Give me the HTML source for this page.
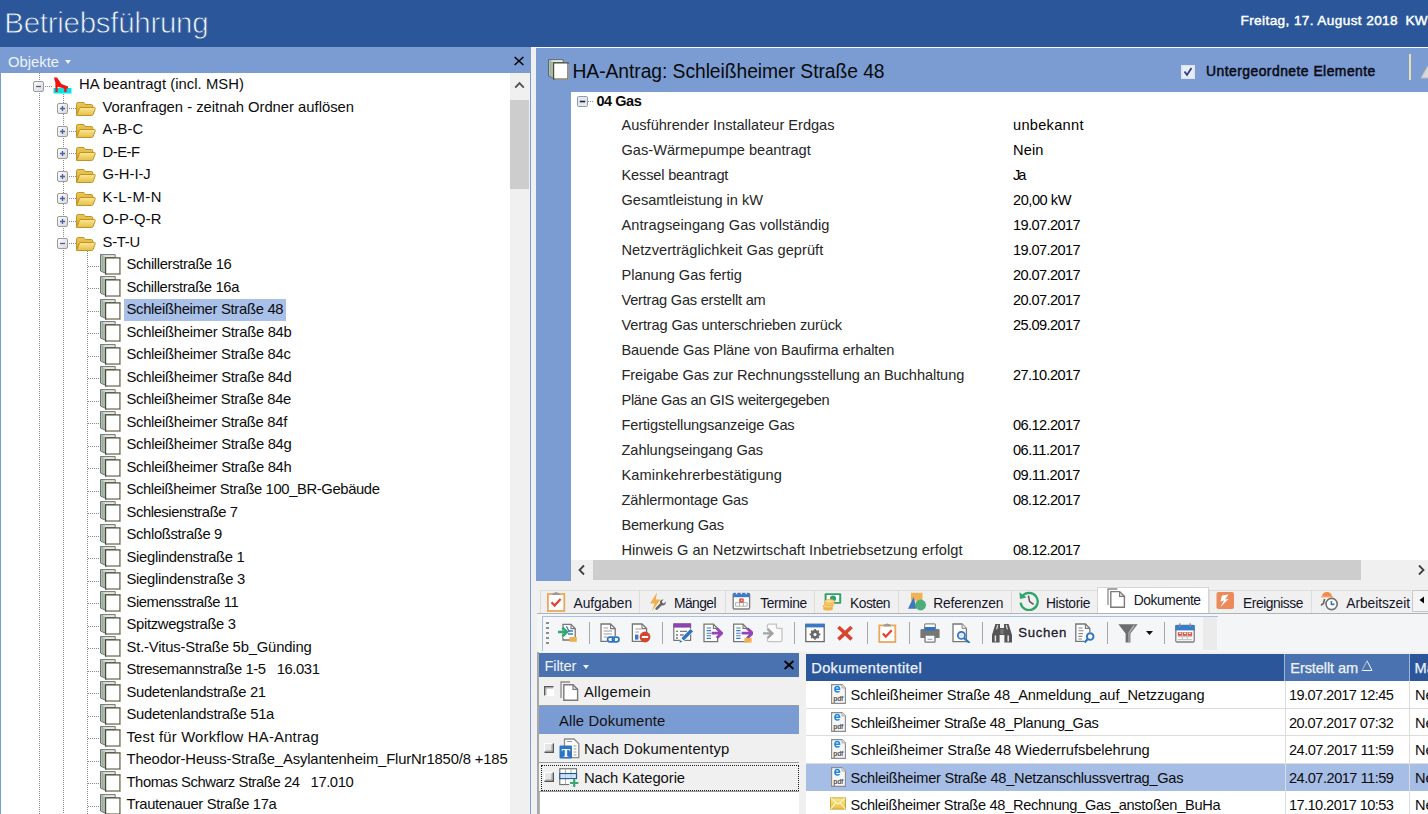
<!DOCTYPE html>
<html lang="de"><head><meta charset="utf-8"><title>Betriebsführung</title>
<style>
*{box-sizing:border-box;margin:0;padding:0}
html,body{width:1428px;height:814px;overflow:hidden}
body{position:relative;background:#f0f0f0;font-family:"Liberation Sans",sans-serif;font-size:14.5px;color:#111}
div,span,svg{position:absolute}
.ic{position:absolute;overflow:visible}
#top{left:0;top:0;width:1428px;height:47px;background:#2b579a}
#apptitle{left:4.3px;top:2.5px;font-size:29.5px;line-height:40px;color:#f4f7fb;white-space:nowrap;-webkit-text-stroke:0.8px #2b579a}
#date{left:1240.5px;top:10px;font-size:13.6px;line-height:22px;font-weight:400;-webkit-text-stroke:0.45px #fff;color:#fff;white-space:nowrap}
#left{left:0;top:47px;width:531px;height:767px;background:#fff}
#objbar{left:0;top:0;width:531px;height:26px;background:#7a9cd2}
.cap{left:8px;top:0;line-height:30px;color:#eef2fa;font-size:14.8px;white-space:nowrap}
.dd{left:65px;top:13px;width:0;height:0;border-left:3.5px solid transparent;border-right:3.5px solid transparent;border-top:4px solid #eef2fa}
#objbar .xbtn{left:512.7px;top:8.2px}
#tree{left:0;top:26px;width:510px;height:741px;background:#fff;overflow:hidden;border-left:1.5px solid #7a9cd2}
#tree>*{margin-left:-1.5px}
.vl{width:1px;background-image:linear-gradient(#8a8a8a 50%,transparent 50%);background-size:1px 2px}
.hl{height:1px;background-image:linear-gradient(90deg,#8a8a8a 50%,transparent 50%);background-size:2px 1px}
.tt{height:22.5px;line-height:22.5px;white-space:pre;font-size:14.8px;color:#0c0c0c}
.selbg{background:#a9c0e8}
#vsb{left:510px;top:26px;width:21px;height:741px;background:#f0f0f0;border-right:1px solid #7a9cd2}
#vthumb{left:0;top:26.5px;width:18.5px;height:89.5px;background:#cdcdcd}
#right{left:536px;top:47px;width:892px;height:533.5px;background:#7a9cd2;overflow:hidden}
#rtop{left:531px;top:46.7px;width:897px;height:1.4px;background:#f6f8fb;z-index:3}
#rtitle{left:36.5px;top:10px;font-size:19.3px;line-height:30px;white-space:nowrap;color:#0a0a0a}
#chk{left:645px;top:17.5px;width:14px;height:14px}
#sub{left:670px;top:12px;font-size:13.9px;font-weight:400;-webkit-text-stroke:0.5px #0a0a14;line-height:24px;white-space:nowrap;color:#0a0a14}
#vsep{left:873px;top:6.5px;width:1.5px;height:26px;background:#e6dfb0}
#detail{left:35px;top:45px;width:857px;height:488.5px;background:#fff;overflow:hidden}
.dh{font-weight:700;font-size:14.5px;line-height:23px;white-space:nowrap;color:#0a0a0a}
.dl{left:50.5px;height:25px;line-height:25px;white-space:nowrap;font-size:14.6px;color:#262626}
.dv{left:442px;height:25px;line-height:25px;white-space:nowrap;font-size:14.6px;color:#000}
#hsb{left:0;top:468px;width:857px;height:20.5px;background:#f0f0f0}
#hthumb{left:21.5px;top:0;width:768.5px;height:19.5px;background:#cdcdcd}
#tabs{left:0;top:587px;width:1428px;height:27px}
#tabs:after{content:"";position:absolute;left:537px;right:0;top:26px;height:1.2px;background:#b2b2b2}
.tab{top:2.5px;height:23.5px;border-left:1px solid #dcdcdc;border-top:1px solid #dcdcdc;background:#f0f0f0}
.tab span{top:0;line-height:25px;font-size:13.8px;white-space:nowrap;color:#15152a}
.tab.act{top:-0.4px;height:26.2px;background:#fff;border:1px solid #d6d6d6;border-bottom:none;z-index:2}
.tab.act span{top:0.8px;line-height:25px}
#tabscroll{left:1412px;top:3px;width:17px;height:22px;background:#f4f4f4;border:1px solid #c8c8c8}
#tbwrap{left:537px;top:614.2px;width:891px;height:38.3px;background:#f4f5f7}
#paneborder{left:536.8px;top:613.6px;width:2px;height:201px;background:#a8a8a8}
#tb{left:4.5px;top:2.3px;width:676px;height:35px;background:#f5f6f8;border-left:1.5px solid #a9c0e6;border-top:1.5px solid #a9c0e6}
#tb>*{margin-left:-1.5px;margin-top:-1.5px}
#grip{left:5px;top:6px;width:3px;height:24px;background-image:linear-gradient(#8c8c8c 50%,transparent 50%);background-size:3px 5px}
.tsep{top:6px;width:1px;height:22px;background:#a8a8a8}
#suchen{left:477.25px;top:6px;font-weight:400;-webkit-text-stroke:0.3px #1b1b2b;font-size:13.2px;line-height:22px;color:#1b1b2b;white-space:nowrap}
#ovf{left:662px;top:1px;width:14px;height:33px;background:#ebebeb}
#filter{left:539px;top:652.5px;width:260px;height:162px}
#fhead{left:0;top:0;width:260px;height:24px;background:#4a72b0}
#fhead .cap{left:5.5px;line-height:26px;font-size:14.8px}
#fhead .dd{left:43.5px;top:12px}
#fhead .xbtn{left:243.5px;top:6.5px}
.frow{left:0;width:260px;background:#f0f0f0;border-bottom:1.8px solid #9c9c9c}
.frow span{top:0;line-height:30px;font-size:14.8px;white-space:nowrap;color:#101010}
.frow.fsel{background:#7a9cd2;border-bottom:none}
.focus{left:1.5px;top:1.6px;right:0;bottom:0.2px;border:1.3px dotted #1a1a1a}
#fbody{left:0;top:139.3px;width:260px;height:30px;background:#fff;border-left:1.5px solid #b5b5b5}
#grid{left:806px;top:654px;width:622px;height:160px;background:#fff;overflow:hidden}
#ghead{left:0;top:0;width:622px;height:27px;background:#2b579a}
.gh{top:0;height:27px;line-height:28.5px;-webkit-text-stroke:0.25px #eef2fa;padding-left:5.25px;color:#eef2fa;font-size:14.6px;white-space:nowrap;border-right:1px solid #9fb4d8;overflow:hidden}
.gh.gsort{background:#4a72b0}
.gr{left:0;width:622px;height:27.5px;border-bottom:1px solid #dcdcdc}
.gr.gsel{background:#a6bde6;border-bottom-color:#a6bde6}
.gt{left:44.6px;top:0;line-height:28px;white-space:nowrap;font-size:14.6px;color:#0c0c0c}
.gd{left:483px;top:0;line-height:28px;white-space:nowrap;font-size:14.6px;color:#0c0c0c}
.gm{left:609px;top:0;line-height:28px;white-space:nowrap;font-size:14.6px;color:#0c0c0c}
.gvl{top:27px;width:1px;height:140px;background:#dcdcdc}

</style></head>
<body>
<svg width="0" height="0" style="position:absolute"><defs>
<linearGradient id="gbox" x1="0" y1="0" x2="1" y2="1"><stop offset="0" stop-color="#fff"/><stop offset="1" stop-color="#d6d6d6"/></linearGradient>
<linearGradient id="gfold" x1="0" y1="0" x2="0" y2="1"><stop offset="0" stop-color="#fbe894"/><stop offset="1" stop-color="#e5bd48"/></linearGradient>
<linearGradient id="gfold2" x1="0" y1="0" x2="0" y2="1"><stop offset="0" stop-color="#ecc958"/><stop offset="1" stop-color="#d3a632"/></linearGradient>
<linearGradient id="gleaf" x1="0" y1="0" x2="1" y2="0"><stop offset="0" stop-color="#a9bfa9"/><stop offset="0.3" stop-color="#dfe9dd"/><stop offset="1" stop-color="#e4ebe2"/></linearGradient>
<linearGradient id="gmail" x1="0" y1="0" x2="0" y2="1"><stop offset="0" stop-color="#fbe88c"/><stop offset="1" stop-color="#e7c047"/></linearGradient>
<symbol id="minus" viewBox="0 0 11 11"><rect x="0.5" y="0.5" width="10" height="10" rx="1.5" fill="url(#gbox)" stroke="#9b9b9b"/><path d="M3 5.5 H8" stroke="#4a5fa5" stroke-width="1.3"/></symbol>
<symbol id="plus" viewBox="0 0 11 11"><rect x="0.5" y="0.5" width="10" height="10" rx="1.5" fill="url(#gbox)" stroke="#9b9b9b"/><path d="M3 5.5 H8 M5.5 3 V8" stroke="#4a5fa5" stroke-width="1.3"/></symbol>
<symbol id="minus2" viewBox="0 0 11 11"><rect x="0.5" y="0.5" width="10" height="10" rx="1" fill="#e4e8ee" stroke="#8a9bb5"/><path d="M2.8 5.5 H8.2" stroke="#222" stroke-width="1.6"/></symbol>
<symbol id="folder" viewBox="0 0 21 16"><path d="M1.5 14 V3.2 Q1.5 1.5 3.2 1.5 H8 Q9.3 1.5 9.8 2.6 L10.2 3.5 H16.3 Q17.8 3.5 17.8 5 V6.5 H6 Q4.6 6.5 4.2 7.8 Z" fill="url(#gfold2)" stroke="#c39424" stroke-width="1"/><path d="M1.6 14.5 L4.4 7.6 Q4.8 6.5 6 6.5 H19.3 Q20.6 6.5 20.2 7.8 L18.2 13.4 Q17.8 14.5 16.6 14.5 Z" fill="url(#gfold)" stroke="#c39424" stroke-width="1"/></symbol>
<symbol id="leaf" viewBox="0 0 21 21"><path d="M0.5 0.6 H15.2 V3.6 H5.4 V19.2 L0.5 17 Z" fill="url(#gleaf)" stroke="#4e5460" stroke-width="0.8"/><path d="M2.4 1.6 V17.8" stroke="#8d9a8d" stroke-width="0.8"/><path d="M4 2.4 V18.4" stroke="#6f7a74" stroke-width="0.7"/><rect x="5.6" y="3.9" width="14.4" height="16.2" fill="#fff" stroke="#4b4b34" stroke-width="1.2"/><path d="M20.6 5 V20.7 H6.6" fill="none" stroke="#b9b99c" stroke-width="0.7"/></symbol>
<symbol id="rootic" viewBox="0 0 19 17"><rect x="0.5" y="11" width="18" height="5.5" fill="#00e5e5"/><path d="M1 0.5 L4 0.5 L8.5 7 L15 9.5 V11.5 H13.6 V15 H11.2 V11.5 L4.6 9.8 V15 H2.4 V6 Z" fill="#f01515"/></symbol>
<symbol id="pdf" viewBox="0 0 15 20"><path d="M0.6 0.6 H11 L14.4 4 V19.4 H0.6 Z" fill="#f6f6f6" stroke="#8c8c8c" stroke-width="1.1"/><path d="M11 0.6 V4 H14.4" fill="#e0e0e0" stroke="#a5a5a5" stroke-width="0.8"/><path d="M4.2 5.2 H8.6 Q8.6 2.4 6.3 2.4 Q3.9 2.4 3.9 5.3 Q3.9 8 6.4 8 Q7.8 8 8.5 7.2" fill="none" stroke="#1e88e0" stroke-width="1.5"/><text x="2.2" y="16.6" font-family="Liberation Sans, sans-serif" font-size="6.8" font-weight="700" fill="#555" letter-spacing="-0.2">pdf</text></symbol>
<symbol id="mail" viewBox="0 0 17 13"><rect x="0.5" y="0.5" width="16" height="12" fill="url(#gmail)" stroke="#caa230" stroke-width="1"/><path d="M0.8 0.8 L8.5 7.2 L16.2 0.8 M0.8 12.2 L6.3 5.6 M16.2 12.2 L10.7 5.6" fill="none" stroke="#fff7cf" stroke-width="1.1"/></symbol>
<symbol id="pin_dn" viewBox="0 0 10 10"><rect x="0" y="0" width="10" height="10" fill="#fff"/><path d="M0.7 9.5 V0.7 H9.5" fill="none" stroke="#5a5a5a" stroke-width="1.4"/><path d="M2 9 V2 H9" fill="none" stroke="#a8a8a8" stroke-width="1"/></symbol>
<symbol id="pin_up" viewBox="0 0 10 10"><rect x="0" y="0" width="10" height="10" fill="#e6e6e6"/><path d="M0.5 9 V0.5 H9" fill="none" stroke="#fff" stroke-width="1.2"/><path d="M0.5 9.3 H9.3 V0.5" fill="none" stroke="#555" stroke-width="1.4"/><path d="M1.8 8 H8 V1.8" fill="none" stroke="#a0a0a0" stroke-width="1"/></symbol>
<symbol id="f_docs" viewBox="0 0 19 20"><path d="M1 17 V1 H10" fill="none" stroke="#8a8a8a" stroke-width="1.3"/><path d="M3.8 3.8 H13 L17.6 8.4 V19.2 H3.8 Z" fill="#fff" stroke="#7a7a7a" stroke-width="1.4"/><path d="M13 3.8 V8.4 H17.6" fill="none" stroke="#7a7a7a" stroke-width="1.2"/></symbol>
<symbol id="f_type" viewBox="0 0 21 21"><path d="M5.5 1 H15 L19.8 5.8 V19.6 H5.5 Z" fill="#fff" stroke="#8a8a8a" stroke-width="1.3"/><path d="M14.5 8 H17.5 M14.5 11 H17.5 M14.5 14 H17.5 M14.5 17 H17.5 M8 3.5 H13" stroke="#9a9a9a" stroke-width="1"/><rect x="0.5" y="7.5" width="12.5" height="13" rx="1" fill="#2f74c0"/><text x="2.4" y="18.8" font-family="Liberation Serif, serif" font-size="13" font-weight="700" fill="#fff">T</text></symbol>
<symbol id="f_cat" viewBox="0 0 21 20"><rect x="0.8" y="0.8" width="17.6" height="16.6" fill="#fff" stroke="#6f6f6f" stroke-width="1.2"/><path d="M6.8 0.8 V17.4 M12.6 0.8 V17.4" stroke="#a5a5a5" stroke-width="0.9"/><rect x="0.8" y="5.8" width="17.6" height="5.4" fill="#cfe4f8" stroke="#24588f" stroke-width="1.2"/><path d="M6.8 6.4 V10.6 M12.6 6.4 V10.6" stroke="#9dbfe0" stroke-width="0.9"/><rect x="10.6" y="11.8" width="10.4" height="8.2" fill="#f0f0f0"/><path d="M16 11.6 V20 M11.6 15.8 H20.4" stroke="#3aa76d" stroke-width="2.3"/></symbol>
<symbol id="t_aufg" viewBox="0 0 20 20"><rect x="0.9" y="2" width="16.4" height="17" fill="#fff" stroke="#e9a85c" stroke-width="1.8"/><path d="M5.5 2.2 Q5.5 0.8 7 0.8 H7.6 Q9 -0.6 10.5 0.8 H11.2 Q12.7 0.8 12.7 2.2 V3 H5.5 Z" fill="#9a9a9a"/><path d="M4.5 10.2 L7.6 13.6 L13.6 7" fill="none" stroke="#e0452f" stroke-width="2.2"/></symbol>
<symbol id="t_mang" viewBox="0 0 20 20"><path d="M10 0.5 L3 11.5 H7.5 L5 19 L13.5 7.5 H8.8 Z" fill="#f0b04f"/><path d="M17.8 8.4 Q19.8 10.4 18 12.6 Q16.6 13.8 14.9 13.3 L10.6 17.6 Q9.6 18.4 8.7 17.5 Q7.9 16.6 8.7 15.7 L13 11.4 Q12.4 9.6 13.8 8.2 Q15 7.1 16.6 7.5 L14.9 9.3 L15.4 11 L17 11.4 L18.8 9.6" fill="#666"/></symbol>
<symbol id="t_term" viewBox="0 0 20 20"><rect x="1.2" y="2.4" width="16.4" height="15.6" rx="1.2" fill="#fff" stroke="#7d7d7d" stroke-width="1.4"/><path d="M1.2 2.2 H17.6 V6.2 H1.2 Z" fill="#3b7cc9"/><path d="M4.6 0.6 V3.2 M9.4 0.6 V3.2 M14.2 0.6 V3.2" stroke="#e8eef8" stroke-width="1.4"/><path d="M3.6 11.6 H15.2 M3.6 15.2 H15.2 M7.5 8 V15.2 M11.3 8 V15.2 M3.6 11.6 V15.2 M15.2 11.6 V15.2" stroke="#b0b0b0" stroke-width="1" fill="none"/><rect x="7.5" y="7.4" width="4" height="4.2" fill="#e04a3a"/><rect x="8.8" y="8.6" width="1.5" height="1.6" fill="#f7c9c0"/></symbol>
<symbol id="t_kost" viewBox="0 0 20 20"><rect x="2.6" y="1.2" width="16.6" height="10.6" rx="1" fill="#2fa06a"/><rect x="4.6" y="3" width="12.6" height="7" fill="#fff"/><circle cx="11" cy="6.5" r="3" fill="#2fa06a"/><ellipse cx="6" cy="16.4" rx="5" ry="2" fill="#f0b545"/><ellipse cx="6" cy="14.2" rx="5" ry="2" fill="#f6cf78" stroke="#e9a93a" stroke-width="0.8"/><ellipse cx="7.6" cy="11.6" rx="5" ry="2" fill="#f6cf78" stroke="#e9a93a" stroke-width="0.8"/><ellipse cx="7.6" cy="9.4" rx="5" ry="2" fill="#f8d98e" stroke="#e9a93a" stroke-width="0.8"/></symbol>
<symbol id="t_ref" viewBox="0 0 20 20"><rect x="4" y="0.8" width="11.5" height="8" fill="#efb257"/><path d="M6.6 5 L1 16.8 H9.6 Z" fill="#3f77bd"/><circle cx="13.6" cy="13" r="5.4" fill="#4dae7c"/></symbol>
<symbol id="t_hist" viewBox="0 0 20 20"><path d="M3.2 5.4 A8.6 8.6 0 1 1 1.6 11.6" fill="none" stroke="#2fa56c" stroke-width="2.3"/><path d="M0.4 1.2 L1 8 L7.6 6.4 Z" fill="#2fa56c"/><path d="M9.4 4.6 L10.6 10.6 L14.6 13.4" fill="none" stroke="#555" stroke-width="1.5"/></symbol>
<symbol id="t_dok" viewBox="0 0 20 20"><path d="M1 17 V1 H10.4" fill="none" stroke="#8a8a8a" stroke-width="1.3"/><path d="M3.8 3.6 H12.6 L17.4 8.4 V19.3 H3.8 Z" fill="#fff" stroke="#7a7a7a" stroke-width="1.4"/><path d="M12.6 3.6 V8.4 H17.4" fill="none" stroke="#7a7a7a" stroke-width="1.2"/></symbol>
<symbol id="t_ereig" viewBox="0 0 20 20"><rect x="0.5" y="1" width="17.5" height="17" rx="2" fill="#ec8a5c"/><path d="M12.6 3.6 L6 4.6 L4.4 10.4 L8 9.6 L4.2 16.2 L12.8 7.8 L9 8.4 Z" fill="#fff"/></symbol>
<symbol id="t_arb" viewBox="0 0 20 20"><path d="M3 5.6 Q3.4 1 8 1 Q12.4 1 13 5.6 Z" fill="#f08c4a"/><rect x="2.4" y="5" width="11.4" height="1.4" fill="#f6a465"/><path d="M5.6 8 L4.4 12.4 L2 14.4" fill="none" stroke="#6a6a6a" stroke-width="1.7"/><circle cx="12.6" cy="13" r="5.6" fill="#fff" stroke="#6f6f6f" stroke-width="1.6"/><path d="M12.4 10 V13.4 H15.4" fill="none" stroke="#3b78c4" stroke-width="1.6"/></symbol>
<symbol id="i_import" viewBox="0 0 20 20"><path d="M5 1.4 H13 L17.2 5.6 V17 H5 Z" fill="#fff" stroke="#767676" stroke-width="1.3"/><path d="M13 1.4 V5.6 H17.2" fill="none" stroke="#767676" stroke-width="1.1"/><path d="M8.4 3.2 L11.4 9 M10 8 H15 M10 11 H15" stroke="#3b78c4" stroke-width="1.3"/><rect x="5" y="5" width="4" height="10" fill="#f5f6f8"/><path d="M-0.6 9 H8 M4.4 4.6 L9 9 L4.4 13.4" fill="none" stroke="#2faa6a" stroke-width="2.6"/><rect x="11.4" y="14" width="7.4" height="4.8" fill="#f0b04f"/></symbol>
<symbol id="i_link" viewBox="0 0 20 20"><path d="M1 1 H10.6 L15.2 5.6 V18.4 H1 Z" fill="#fff" stroke="#767676" stroke-width="1.3"/><path d="M10.6 1 V5.6 H15.2" fill="none" stroke="#767676" stroke-width="1.1"/><path d="M3.6 5 H8 M3.6 8 H12 M3.6 11 H12 M3.6 14 H7" stroke="#9a9a9a" stroke-width="1"/><rect x="7.6" y="13" width="12" height="7" fill="#f5f6f8"/><rect x="7.6" y="14.2" width="6.6" height="4.6" rx="2.3" fill="none" stroke="#2f74c0" stroke-width="1.7"/><rect x="12.4" y="14.2" width="6.6" height="4.6" rx="2.3" fill="none" stroke="#2f74c0" stroke-width="1.7"/></symbol>
<symbol id="i_docminus" viewBox="0 0 20 20"><path d="M1.4 1 H11 L15.6 5.6 V18.4 H1.4 Z" fill="#fff" stroke="#767676" stroke-width="1.3"/><path d="M11 1 V5.6 H15.6" fill="none" stroke="#767676" stroke-width="1.1"/><path d="M4.4 6 H10 M4.4 9 H8" stroke="#9a9a9a" stroke-width="1"/><rect x="4" y="11.6" width="3.4" height="5" fill="#3b78c4"/><circle cx="14" cy="14" r="5.4" fill="#d5442f"/><rect x="10.8" y="13" width="6.4" height="2" rx="0.6" fill="#fff"/></symbol>
<symbol id="i_edit" viewBox="0 0 20 20"><rect x="0.8" y="1" width="16.8" height="16.4" fill="#fff" stroke="#767676" stroke-width="1.2"/><rect x="0.4" y="0.4" width="17.6" height="4.2" fill="#8e44ad"/><path d="M3 8.4 H5 M7 8.4 H14 M3 12 H5 M7 12 H11 M3 15 H5" stroke="#7a7a7a" stroke-width="1.3"/><path d="M17.6 5.6 L20.4 8.4 L11 17.8 L6.8 19.4 L8.2 15 Z" fill="#2f74c0" stroke="#f5f6f8" stroke-width="0.8"/><path d="M6.8 19.4 L8.2 15 L11 17.8 Z" fill="#f5f6f8"/><path d="M6.4 19.8 L7.4 17 L9.2 18.8 Z" fill="#2f74c0"/></symbol>
<symbol id="i_export" viewBox="0 0 20 20"><path d="M1 1.2 H10.4 L14.6 5.4 V18.6 H1 Z" fill="#fff" stroke="#767676" stroke-width="1.3"/><path d="M10.4 1.2 V5.4 H14.6" fill="none" stroke="#767676" stroke-width="1.1"/><path d="M3.6 5 H8 M3.6 7.6 H8 M3.6 10.2 H8 M3.6 12.8 H8 M3.6 15.4 H8" stroke="#3b78c4" stroke-width="1.1"/><rect x="9" y="7" width="7" height="7" fill="#fff"/><path d="M8.6 10.2 H17 M13.8 5.4 L18.8 10.2 L13.8 15" fill="none" stroke="#9545b5" stroke-width="2.8"/></symbol>
<symbol id="i_export2" viewBox="0 0 20 20"><path d="M0.6 1.2 H10 L14.2 5.4 V18.6 H0.6 Z" fill="#fff" stroke="#767676" stroke-width="1.3"/><path d="M10 1.2 V5.4 H14.2" fill="none" stroke="#767676" stroke-width="1.1"/><path d="M3.2 5 H7.6 M3.2 7.6 H7.6 M3.2 10.2 H7.6 M3.2 12.8 H7.6 M3.2 15.4 H7.6" stroke="#3b78c4" stroke-width="1.1"/><rect x="9" y="7" width="7" height="7" fill="#fff"/><path d="M8.6 10.2 H17.6 M14.4 5.4 L19.4 10.2 L14.4 15" fill="none" stroke="#9545b5" stroke-width="2.8"/><rect x="11.4" y="15" width="7.2" height="4.6" fill="#f0b04f"/></symbol>
<symbol id="i_importg" viewBox="0 0 20 20"><path d="M4.4 6.4 V2.6 Q4.4 1.2 5.8 1.2 H13.4 V4 Q13.4 5.4 14.8 5.4 H19 V17.2 Q19 18.6 17.6 18.6 H5.8 Q4.4 18.6 4.4 17.2 V14.4" fill="#fafafa" stroke="#c4c4c4" stroke-width="1.3"/><path d="M-0.4 10.4 H8 M4.6 6 L9.4 10.4 L4.6 14.8" fill="none" stroke="#a3a3a3" stroke-width="2.4"/></symbol>
<symbol id="i_gear" viewBox="0 0 20 20"><rect x="0.8" y="1.4" width="18.4" height="17.2" fill="#fff" stroke="#6a6a6a" stroke-width="1.3"/><rect x="0.4" y="0.8" width="19.2" height="3.6" fill="#3b78c4"/><circle cx="10" cy="11.4" r="3.2" fill="none" stroke="#6a6a6a" stroke-width="2.4"/><path d="M10 6 V16.8 M4.6 11.4 H15.4 M6.2 7.6 L13.8 15.2 M13.8 7.6 L6.2 15.2" stroke="#6a6a6a" stroke-width="1.7"/><circle cx="10" cy="11.4" r="1.5" fill="#fff"/></symbol>
<symbol id="i_x" viewBox="0 0 20 20"><path d="M3.4 4 L16.6 16.4 M16.6 4 L3.4 16.4" stroke="#d9452f" stroke-width="3.6"/></symbol>
<symbol id="i_check" viewBox="0 0 20 20"><rect x="2.3" y="2.4" width="16" height="16.6" fill="#fff" stroke="#e9a85c" stroke-width="1.8"/><path d="M6.6 2.6 Q6.6 1.2 8 1.2 H8.6 Q10.2 -0.2 11.8 1.2 H12.4 Q13.8 1.2 13.8 2.6 V3.4 H6.6 Z" fill="#9a9a9a"/><path d="M5.8 10.4 L8.8 13.6 L14.8 7.2" fill="none" stroke="#e0452f" stroke-width="2.2"/></symbol>
<symbol id="i_print" viewBox="0 0 20 20"><rect x="4.6" y="0.8" width="10.8" height="7" rx="1" fill="#fff" stroke="#8a8a8a" stroke-width="1.2"/><rect x="4.8" y="4" width="10.4" height="4" fill="#2f74c0"/><path d="M0.4 7.4 Q0.4 6 1.8 6 H18.2 Q19.6 6 19.6 7.4 V15 H0.4 Z" fill="#767676"/><rect x="4.8" y="4.2" width="10.4" height="3.4" fill="#2f74c0"/><rect x="5" y="12" width="10" height="7.2" rx="0.8" fill="#fff" stroke="#767676" stroke-width="1.3"/><path d="M7.6 16.4 H12.4" stroke="#9ab5dd" stroke-width="1.4"/></symbol>
<symbol id="i_preview" viewBox="0 0 20 20"><path d="M2 1 H11 L15.4 5.4 V18.6 H2 Z" fill="#fff" stroke="#767676" stroke-width="1.3"/><path d="M11 1 V5.4 H15.4" fill="#e4e4e4" stroke="#8a8a8a" stroke-width="1"/><circle cx="10.4" cy="12.4" r="3.6" fill="#dfe8f5" stroke="#2f74c0" stroke-width="1.7"/><path d="M13.2 15.2 L18.6 20" stroke="#2f74c0" stroke-width="2.2"/></symbol>
<symbol id="i_bino" viewBox="0 0 20 20"><path d="M3.4 1 H8 V5 H12 V1 H16.6 L20 12 V19.4 H12.4 V12 H7.6 V19.4 H0 V12 Z" fill="#555"/><path d="M3.4 12.6 V18.6 M16.2 12.6 V18.6" stroke="#e6e6e6" stroke-width="1.5"/><path d="M5.8 2 L4.6 6.4 M14.2 2 L15.4 6.4" stroke="#d8d8d8" stroke-width="1.2"/><rect x="8.4" y="6" width="3.2" height="5" fill="#777"/></symbol>
<symbol id="i_docsearch" viewBox="0 0 20 20"><path d="M0.8 1 H10.4 L14.8 5.4 V18.4 H0.8 Z" fill="#fff" stroke="#767676" stroke-width="1.3"/><path d="M10.4 1 V5.4 H14.8" fill="none" stroke="#767676" stroke-width="1.1"/><path d="M3.4 5 H7.6 M3.4 7.8 H8.6 M3.4 10.6 H8 M3.4 13.4 H7.4 M3.4 16 H7" stroke="#8a8a8a" stroke-width="1.1"/><rect x="9.4" y="9" width="8" height="10.6" fill="#f5f6f8"/><circle cx="15.2" cy="13.6" r="3.3" fill="#fff" stroke="#2f74c0" stroke-width="1.9"/><path d="M12.8 16 L9.6 19.4" stroke="#2f74c0" stroke-width="2.2"/></symbol>
<symbol id="i_funnel" viewBox="0 0 20 20"><path d="M0.4 1.2 H19.6 L12.4 10.4 V19.6 H7.6 V10.4 Z" fill="#6e6e6e"/><path d="M11.6 10 L17.2 2.6 H15.2 L10.4 9.4 V19 H11.6 Z" fill="#b5b5b5"/></symbol>
<symbol id="i_cal" viewBox="0 0 20 20"><rect x="0.8" y="2.4" width="18.4" height="16.6" rx="1.2" fill="#fff" stroke="#7d7d7d" stroke-width="1.3"/><path d="M0.4 2 H19.6 V7.4 H0.4 Z" fill="#3b7cc9"/><path d="M4.8 0.2 V4 M15.2 0.2 V4" stroke="#8a8a8a" stroke-width="1.2"/><rect x="2.8" y="9.2" width="14.4" height="3.6" fill="#e0503c"/><path d="M7.4 9 V16.6 M12.4 9 V16.6 M2.8 13.6 H17.2 M2.8 16.6 H17.2" stroke="#c4c4c4" stroke-width="1.1"/><path d="M4.2 10.4 H6.2 M9 10.4 H11 M13.8 10.4 H15.8" stroke="#fff" stroke-width="1.4"/></symbol>
</defs></svg>


<div id="top"><div id="apptitle" style="letter-spacing:-0.285px;">Betriebsführung</div><div id="date" style="letter-spacing:0.391px;">Freitag, 17. August 2018<span style="position:static;letter-spacing:0">&nbsp; KW 33</span></div></div>
<div id="left"><div id="objbar"><span class="cap" style="letter-spacing:0.000px;">Objekte</span><span class="dd"></span><svg class="xbtn" width="12" height="12" viewBox="0 0 12 12"><path d="M1.6 2 L10.4 10 M10.4 2 L1.6 10" stroke="#000" stroke-width="1.5" fill="none"/></svg></div>
<div id="tree">
<div class="vl" style="left:39px;top:0;height:741px"></div>
<div class="vl" style="left:63px;top:21px;height:720px"></div>
<div class="vl" style="left:87px;top:178px;height:563px"></div>
<div class="hl" style="left:45px;top:12.50px;width:8px"></div>
<svg class="ic" style="left:33.5px;top:7.50px" width="11" height="11"><use href="#minus"/></svg>
<svg class="ic" style="left:53px;top:3.50px" width="19" height="17"><use href="#rootic"/></svg>
<div class="tt" style="left:79.5px;top:0.15px;letter-spacing:0.056px;">HA beantragt (incl. MSH)</div>
<div class="hl" style="left:69px;top:35.00px;width:8px"></div>
<svg class="ic" style="left:57.5px;top:30.00px" width="11" height="11"><use href="#plus"/></svg>
<svg class="ic" style="left:75.5px;top:27.50px" width="21" height="16"><use href="#folder"/></svg>
<div class="tt" style="left:103px;top:22.65px;letter-spacing:-0.006px;">Voranfragen - zeitnah Ordner auflösen</div>
<div class="hl" style="left:69px;top:57.50px;width:8px"></div>
<svg class="ic" style="left:57.5px;top:52.50px" width="11" height="11"><use href="#plus"/></svg>
<svg class="ic" style="left:75.5px;top:50.00px" width="21" height="16"><use href="#folder"/></svg>
<div class="tt" style="left:103px;top:45.15px;letter-spacing:0.094px;">A-B-C</div>
<div class="hl" style="left:69px;top:80.00px;width:8px"></div>
<svg class="ic" style="left:57.5px;top:75.00px" width="11" height="11"><use href="#plus"/></svg>
<svg class="ic" style="left:75.5px;top:72.50px" width="21" height="16"><use href="#folder"/></svg>
<div class="tt" style="left:103px;top:67.65px;letter-spacing:-0.491px;">D-E-F</div>
<div class="hl" style="left:69px;top:102.50px;width:8px"></div>
<svg class="ic" style="left:57.5px;top:97.50px" width="11" height="11"><use href="#plus"/></svg>
<svg class="ic" style="left:75.5px;top:95.00px" width="21" height="16"><use href="#folder"/></svg>
<div class="tt" style="left:103px;top:90.15px;letter-spacing:-0.036px;">G-H-I-J</div>
<div class="hl" style="left:69px;top:125.00px;width:8px"></div>
<svg class="ic" style="left:57.5px;top:120.00px" width="11" height="11"><use href="#plus"/></svg>
<svg class="ic" style="left:75.5px;top:117.50px" width="21" height="16"><use href="#folder"/></svg>
<div class="tt" style="left:103px;top:112.65px;letter-spacing:0.513px;">K-L-M-N</div>
<div class="hl" style="left:69px;top:147.50px;width:8px"></div>
<svg class="ic" style="left:57.5px;top:142.50px" width="11" height="11"><use href="#plus"/></svg>
<svg class="ic" style="left:75.5px;top:140.00px" width="21" height="16"><use href="#folder"/></svg>
<div class="tt" style="left:103px;top:135.15px;letter-spacing:0.077px;">O-P-Q-R</div>
<div class="hl" style="left:69px;top:170.00px;width:8px"></div>
<svg class="ic" style="left:57.5px;top:165.00px" width="11" height="11"><use href="#minus"/></svg>
<svg class="ic" style="left:75.5px;top:162.50px" width="21" height="16"><use href="#folder"/></svg>
<div class="tt" style="left:103px;top:157.65px;letter-spacing:-0.228px;">S-T-U</div>
<div class="hl" style="left:88px;top:192.50px;width:13px"></div>
<svg class="ic" style="left:100px;top:180.80px" width="21" height="21"><use href="#leaf"/></svg>
<div class="tt" style="left:127px;top:180.15px;letter-spacing:-0.355px;">Schillerstraße 16</div>
<div class="hl" style="left:88px;top:215.00px;width:13px"></div>
<svg class="ic" style="left:100px;top:203.30px" width="21" height="21"><use href="#leaf"/></svg>
<div class="tt" style="left:127px;top:202.65px;letter-spacing:-0.375px;">Schillerstraße 16a</div>
<div class="hl" style="left:88px;top:237.50px;width:13px"></div>
<svg class="ic" style="left:100px;top:225.80px" width="21" height="21"><use href="#leaf"/></svg>
<div class="selbg" style="left:124px;top:225.50px;width:162px;height:22px"></div>
<div class="tt" style="left:127px;top:225.15px;letter-spacing:-0.300px;">Schleißheimer Straße 48</div>
<div class="hl" style="left:88px;top:260.00px;width:13px"></div>
<svg class="ic" style="left:100px;top:248.30px" width="21" height="21"><use href="#leaf"/></svg>
<div class="tt" style="left:127px;top:247.65px;letter-spacing:-0.287px;">Schleißheimer Straße 84b</div>
<div class="hl" style="left:88px;top:282.50px;width:13px"></div>
<svg class="ic" style="left:100px;top:270.80px" width="21" height="21"><use href="#leaf"/></svg>
<div class="tt" style="left:127px;top:270.15px;letter-spacing:-0.294px;">Schleißheimer Straße 84c</div>
<div class="hl" style="left:88px;top:305.00px;width:13px"></div>
<svg class="ic" style="left:100px;top:293.30px" width="21" height="21"><use href="#leaf"/></svg>
<div class="tt" style="left:127px;top:292.65px;letter-spacing:-0.287px;">Schleißheimer Straße 84d</div>
<div class="hl" style="left:88px;top:327.50px;width:13px"></div>
<svg class="ic" style="left:100px;top:315.80px" width="21" height="21"><use href="#leaf"/></svg>
<div class="tt" style="left:127px;top:315.15px;letter-spacing:-0.308px;">Schleißheimer Straße 84e</div>
<div class="hl" style="left:88px;top:350.00px;width:13px"></div>
<svg class="ic" style="left:100px;top:338.30px" width="21" height="21"><use href="#leaf"/></svg>
<div class="tt" style="left:127px;top:337.65px;letter-spacing:-0.303px;">Schleißheimer Straße 84f</div>
<div class="hl" style="left:88px;top:372.50px;width:13px"></div>
<svg class="ic" style="left:100px;top:360.80px" width="21" height="21"><use href="#leaf"/></svg>
<div class="tt" style="left:127px;top:360.15px;letter-spacing:-0.287px;">Schleißheimer Straße 84g</div>
<div class="hl" style="left:88px;top:395.00px;width:13px"></div>
<svg class="ic" style="left:100px;top:383.30px" width="21" height="21"><use href="#leaf"/></svg>
<div class="tt" style="left:127px;top:382.65px;letter-spacing:-0.287px;">Schleißheimer Straße 84h</div>
<div class="hl" style="left:88px;top:417.50px;width:13px"></div>
<svg class="ic" style="left:100px;top:405.80px" width="21" height="21"><use href="#leaf"/></svg>
<div class="tt" style="left:127px;top:405.15px;letter-spacing:-0.385px;">Schleißheimer Straße 100_BR-Gebäude</div>
<div class="hl" style="left:88px;top:440.00px;width:13px"></div>
<svg class="ic" style="left:100px;top:428.30px" width="21" height="21"><use href="#leaf"/></svg>
<div class="tt" style="left:127px;top:427.65px;letter-spacing:-0.438px;">Schlesienstraße 7</div>
<div class="hl" style="left:88px;top:462.50px;width:13px"></div>
<svg class="ic" style="left:100px;top:450.80px" width="21" height="21"><use href="#leaf"/></svg>
<div class="tt" style="left:127px;top:450.15px;letter-spacing:-0.345px;">Schloßstraße 9</div>
<div class="hl" style="left:88px;top:485.00px;width:13px"></div>
<svg class="ic" style="left:100px;top:473.30px" width="21" height="21"><use href="#leaf"/></svg>
<div class="tt" style="left:127px;top:472.65px;letter-spacing:-0.299px;">Sieglindenstraße 1</div>
<div class="hl" style="left:88px;top:507.50px;width:13px"></div>
<svg class="ic" style="left:100px;top:495.80px" width="21" height="21"><use href="#leaf"/></svg>
<div class="tt" style="left:127px;top:495.15px;letter-spacing:-0.272px;">Sieglindenstraße 3</div>
<div class="hl" style="left:88px;top:530.00px;width:13px"></div>
<svg class="ic" style="left:100px;top:518.30px" width="21" height="21"><use href="#leaf"/></svg>
<div class="tt" style="left:127px;top:517.65px;letter-spacing:-0.452px;">Siemensstraße 11</div>
<div class="hl" style="left:88px;top:552.50px;width:13px"></div>
<svg class="ic" style="left:100px;top:540.80px" width="21" height="21"><use href="#leaf"/></svg>
<div class="tt" style="left:127px;top:540.15px;letter-spacing:-0.317px;">Spitzwegstraße 3</div>
<div class="hl" style="left:88px;top:575.00px;width:13px"></div>
<svg class="ic" style="left:100px;top:563.30px" width="21" height="21"><use href="#leaf"/></svg>
<div class="tt" style="left:127px;top:562.65px;letter-spacing:-0.175px;">St.-Vitus-Straße 5b_Günding</div>
<div class="hl" style="left:88px;top:597.50px;width:13px"></div>
<svg class="ic" style="left:100px;top:585.80px" width="21" height="21"><use href="#leaf"/></svg>
<div class="tt" style="left:127px;top:585.15px;letter-spacing:-0.407px;">Stresemannstraße 1-5&nbsp;  16.031</div>
<div class="hl" style="left:88px;top:620.00px;width:13px"></div>
<svg class="ic" style="left:100px;top:608.30px" width="21" height="21"><use href="#leaf"/></svg>
<div class="tt" style="left:127px;top:607.65px;letter-spacing:-0.318px;">Sudetenlandstraße 21</div>
<div class="hl" style="left:88px;top:642.50px;width:13px"></div>
<svg class="ic" style="left:100px;top:630.80px" width="21" height="21"><use href="#leaf"/></svg>
<div class="tt" style="left:127px;top:630.15px;letter-spacing:-0.302px;">Sudetenlandstraße 51a</div>
<div class="hl" style="left:88px;top:665.00px;width:13px"></div>
<svg class="ic" style="left:100px;top:653.30px" width="21" height="21"><use href="#leaf"/></svg>
<div class="tt" style="left:127px;top:652.65px;letter-spacing:0.226px;">Test für Workflow HA-Antrag</div>
<div class="hl" style="left:88px;top:687.50px;width:13px"></div>
<svg class="ic" style="left:100px;top:675.80px" width="21" height="21"><use href="#leaf"/></svg>
<div class="tt" style="left:127px;top:675.15px;letter-spacing:-0.147px;">Theodor-Heuss-Straße_Asylantenheim_FlurNr1850/8 +185</div>
<div class="hl" style="left:88px;top:710.00px;width:13px"></div>
<svg class="ic" style="left:100px;top:698.30px" width="21" height="21"><use href="#leaf"/></svg>
<div class="tt" style="left:127px;top:697.65px;letter-spacing:-0.431px;">Thomas Schwarz Straße 24&nbsp;  17.010</div>
<div class="hl" style="left:88px;top:732.50px;width:13px"></div>
<svg class="ic" style="left:100px;top:720.80px" width="21" height="21"><use href="#leaf"/></svg>
<div class="tt" style="left:127px;top:720.15px;letter-spacing:-0.336px;">Trautenauer Straße 17a</div>
</div>
<div id="vsb"><svg width="19" height="26" viewBox="0 0 19 26" style="position:absolute;left:0;top:0"><path d="M5.2 14.6 L9.5 10.2 L13.8 14.6" stroke="#505050" stroke-width="1.9" fill="none"/></svg><div id="vthumb"></div></div>
</div>
<div id="rtop"></div>
<div id="right">
<svg class="ic" style="left:11.5px;top:12px" width="21" height="21"><use href="#leaf"/></svg>
<div id="rtitle" style="letter-spacing:-0.058px;">HA-Antrag: Schleißheimer Straße 48</div>
<div id="chk"><svg width="14" height="14" viewBox="0 0 14 14"><rect x="0" y="0" width="14" height="14" fill="#dfe4ee"/><rect x="1.5" y="1.5" width="11" height="11" fill="#e9edf5"/><path d="M3.5 6.5 L6 10 L10.5 3" stroke="#2a3f8f" stroke-width="1.8" fill="none"/></svg></div>
<div id="sub" style="letter-spacing:0.466px;">Untergeordnete Elemente</div>
<div id="vsep"></div>
<svg class="ic" style="left:885px;top:17px" width="8" height="14"><path d="M8 0 L0 14 L8 14 Z" fill="#d9d9d9" stroke="#bdbdbd" stroke-width="1"/></svg>
<div id="detail">
<svg class="ic" style="left:5.5px;top:3.5px" width="11" height="11"><use href="#minus2"/></svg>
<div class="hl" style="left:17px;top:8.5px;width:5px"></div>
<div class="dh" style="left:25.5px;top:-2.5px;letter-spacing:-0.471px;">04 Gas</div>
<div class="dl" style="top:21.40px;letter-spacing:-0.011px;">Ausführender Installateur Erdgas</div>
<div class="dv" style="top:21.40px;letter-spacing:0.286px;">unbekannt</div>
<div class="dl" style="top:46.40px;letter-spacing:0.010px;">Gas-Wärmepumpe beantragt</div>
<div class="dv" style="top:46.40px;letter-spacing:0.121px;">Nein</div>
<div class="dl" style="top:71.40px;letter-spacing:-0.174px;">Kessel beantragt</div>
<div class="dv" style="top:71.40px;letter-spacing:-2.011px;">Ja</div>
<div class="dl" style="top:96.40px;letter-spacing:-0.022px;">Gesamtleistung in kW</div>
<div class="dv" style="top:96.40px;letter-spacing:-0.457px;">20,00 kW</div>
<div class="dl" style="top:121.40px;letter-spacing:0.064px;">Antragseingang Gas vollständig</div>
<div class="dv" style="top:121.40px;letter-spacing:-0.605px;">19.07.2017</div>
<div class="dl" style="top:146.40px;letter-spacing:0.045px;">Netzverträglichkeit Gas geprüft</div>
<div class="dv" style="top:146.40px;letter-spacing:-0.605px;">19.07.2017</div>
<div class="dl" style="top:171.40px;letter-spacing:-0.036px;">Planung Gas fertig</div>
<div class="dv" style="top:171.40px;letter-spacing:-0.605px;">20.07.2017</div>
<div class="dl" style="top:196.40px;letter-spacing:-0.228px;">Vertrag Gas erstellt am</div>
<div class="dv" style="top:196.40px;letter-spacing:-0.605px;">20.07.2017</div>
<div class="dl" style="top:221.40px;letter-spacing:-0.152px;">Vertrag Gas unterschrieben zurück</div>
<div class="dv" style="top:221.40px;letter-spacing:-0.605px;">25.09.2017</div>
<div class="dl" style="top:246.40px;letter-spacing:-0.121px;">Bauende Gas Pläne von Baufirma erhalten</div>
<div class="dl" style="top:271.40px;letter-spacing:-0.075px;">Freigabe Gas zur Rechnungsstellung an Buchhaltung</div>
<div class="dv" style="top:271.40px;letter-spacing:-0.605px;">27.10.2017</div>
<div class="dl" style="top:296.40px;letter-spacing:-0.323px;">Pläne Gas an GIS weitergegeben</div>
<div class="dl" style="top:321.40px;letter-spacing:-0.148px;">Fertigstellungsanzeige Gas</div>
<div class="dv" style="top:321.40px;letter-spacing:-0.605px;">06.12.2017</div>
<div class="dl" style="top:346.40px;letter-spacing:-0.068px;">Zahlungseingang Gas</div>
<div class="dv" style="top:346.40px;letter-spacing:-0.497px;">06.11.2017</div>
<div class="dl" style="top:371.40px;letter-spacing:0.104px;">Kaminkehrerbestätigung</div>
<div class="dv" style="top:371.40px;letter-spacing:-0.497px;">09.11.2017</div>
<div class="dl" style="top:396.40px;letter-spacing:-0.131px;">Zählermontage Gas</div>
<div class="dv" style="top:396.40px;letter-spacing:-0.605px;">08.12.2017</div>
<div class="dl" style="top:421.40px;letter-spacing:-0.246px;">Bemerkung Gas</div>
<div class="dl" style="top:446.40px;letter-spacing:0.037px;">Hinweis G an Netzwirtschaft Inbetriebsetzung erfolgt</div>
<div class="dv" style="top:446.40px;letter-spacing:-0.605px;">08.12.2017</div>
<div id="hsb"><svg width="20" height="20" style="position:absolute;left:3px;top:0" viewBox="0 0 20 20"><path d="M10 5.5 L5.5 10 L10 14.5" stroke="#404040" stroke-width="1.8" fill="none"/></svg><div id="hthumb"></div><svg width="20" height="20" style="position:absolute;right:-3px;top:0" viewBox="0 0 20 20"><path d="M8 5.5 L12.5 10 L8 14.5" stroke="#404040" stroke-width="1.8" fill="none"/></svg></div>
</div></div>
<div id="tabs">
<div class="tab" style="left:539.5px;width:99.5px"><svg class="ic" style="left:6.7px;top:1.3px" width="20" height="20"><use href="#t_aufg"/></svg><span style="left:33.0px;letter-spacing:-0.072px;">Aufgaben</span></div>
<div class="tab" style="left:639px;width:85.5px"><svg class="ic" style="left:7.0px;top:1.5px" width="20" height="20"><use href="#t_mang"/></svg><span style="left:34px;letter-spacing:-0.544px;">Mängel</span></div>
<div class="tab" style="left:724.5px;width:89.5px"><svg class="ic" style="left:6.0px;top:0.6px" width="20" height="20"><use href="#t_term"/></svg><span style="left:34.75px;letter-spacing:-0.368px;">Termine</span></div>
<div class="tab" style="left:814px;width:84px"><svg class="ic" style="left:7.0px;top:1.3px" width="20" height="20"><use href="#t_kost"/></svg><span style="left:35px;letter-spacing:-0.495px;">Kosten</span></div>
<div class="tab" style="left:898px;width:112.5px"><svg class="ic" style="left:7.8px;top:1.7px" width="20" height="20"><use href="#t_ref"/></svg><span style="left:34.25px;letter-spacing:-0.134px;">Referenzen</span></div>
<div class="tab" style="left:1010.5px;width:86.5px"><svg class="ic" style="left:7.1px;top:0.9px" width="20" height="20"><use href="#t_hist"/></svg><span style="left:34.5px;letter-spacing:-0.348px;">Historie</span></div>
<div class="tab act" style="left:1097px;width:111.5px"><svg class="ic" style="left:8.5px;top:0.2px" width="20" height="20"><use href="#t_dok"/></svg><span style="left:35.75px;letter-spacing:-0.413px;">Dokumente</span></div>
<div class="tab" style="left:1208.5px;width:102.0px"><svg class="ic" style="left:6.5px;top:0.4px" width="20" height="20"><use href="#t_ereig"/></svg><span style="left:33.5px;letter-spacing:-0.442px;">Ereignisse</span></div>
<div class="tab" style="left:1310.5px;width:100.5px"><svg class="ic" style="left:7.0px;top:0.4px" width="20" height="20"><use href="#t_arb"/></svg><span style="left:34.75px;letter-spacing:-0.061px;">Arbeitszeit</span></div>
<div id="tabscroll"><svg width="16" height="20" viewBox="0 0 16 20"><path d="M11 5.5 L6.5 9 L11 12.5 Z" fill="#000"/></svg></div>
</div>
<div id="paneborder"></div>
<div id="tbwrap"><div id="tb">
<div id="grip"></div>
<svg class="ic" style="left:16.5px;top:6.9px" width="20" height="20"><use href="#i_import"/></svg>
<svg class="ic" style="left:59.0px;top:6.9px" width="20" height="20"><use href="#i_link"/></svg>
<svg class="ic" style="left:89.5px;top:6.9px" width="20" height="20"><use href="#i_docminus"/></svg>
<svg class="ic" style="left:132.0px;top:6.9px" width="20" height="20"><use href="#i_edit"/></svg>
<svg class="ic" style="left:161.5px;top:6.9px" width="20" height="20"><use href="#i_export"/></svg>
<svg class="ic" style="left:191.5px;top:6.9px" width="20" height="20"><use href="#i_export2"/></svg>
<svg class="ic" style="left:221.5px;top:6.9px" width="20" height="20"><use href="#i_importg"/></svg>
<svg class="ic" style="left:264.2px;top:6.9px" width="20" height="20"><use href="#i_gear"/></svg>
<svg class="ic" style="left:294.0px;top:6.9px" width="20" height="20"><use href="#i_x"/></svg>
<svg class="ic" style="left:335.8px;top:6.9px" width="20" height="20"><use href="#i_check"/></svg>
<svg class="ic" style="left:378.7px;top:6.9px" width="20" height="20"><use href="#i_print"/></svg>
<svg class="ic" style="left:409.8px;top:6.9px" width="20" height="20"><use href="#i_preview"/></svg>
<svg class="ic" style="left:451.3px;top:6.9px" width="20" height="20"><use href="#i_bino"/></svg>
<svg class="ic" style="left:534.0px;top:6.9px" width="20" height="20"><use href="#i_docsearch"/></svg>
<svg class="ic" style="left:576.5px;top:6.9px" width="20" height="20"><use href="#i_funnel"/></svg>
<svg class="ic" style="left:634.4px;top:6.9px" width="20" height="20"><use href="#i_cal"/></svg>
<div class="tsep" style="left:48.0px"></div>
<div class="tsep" style="left:120.8px"></div>
<div class="tsep" style="left:253.1px"></div>
<div class="tsep" style="left:325.5px"></div>
<div class="tsep" style="left:368.0px"></div>
<div class="tsep" style="left:440.5px"></div>
<div class="tsep" style="left:565.5px"></div>
<div class="tsep" style="left:623.1px"></div>
<div id="suchen" style="letter-spacing:0.678px;">Suchen</div>
<svg class="ic" style="left:605.2px;top:15px" width="7" height="4"><path d="M0 0 L7 0 L3.5 4 Z" fill="#111"/></svg>
<div id="ovf"></div>
</div></div>
<div id="filter"><div id="fhead"><span class="cap" style="letter-spacing:-0.190px;">Filter</span><span class="dd"></span><svg class="xbtn" width="12" height="12" viewBox="0 0 12 12"><path d="M1.6 2 L10.4 10 M10.4 2 L1.6 10" stroke="#000" stroke-width="1.7" fill="none"/></svg></div>
<div class="frow" style="top:24px;height:29px"><svg class="ic" style="left:5px;top:9px" width="10" height="10"><use href="#pin_dn"/></svg><svg class="ic" style="left:21px;top:4px" width="19" height="20"><use href="#f_docs"/></svg><span style="left:45px;letter-spacing:0.224px;">Allgemein</span></div>
<div class="frow fsel" style="top:53px;height:28.5px"><span style="left:20px;letter-spacing:0.139px;">Alle Dokumente</span></div>
<div class="frow" style="top:81.5px;height:29px"><svg class="ic" style="left:5px;top:9px" width="10" height="10"><use href="#pin_up"/></svg><svg class="ic" style="left:19.5px;top:4px" width="21" height="21"><use href="#f_type"/></svg><span style="left:45px;letter-spacing:0.178px;">Nach Dokumententyp</span></div>
<div class="frow" style="top:110.5px;height:28.8px"><div class="focus"></div><svg class="ic" style="left:5px;top:9px" width="10" height="10"><use href="#pin_up"/></svg><svg class="ic" style="left:19.5px;top:4.5px" width="20" height="19"><use href="#f_cat"/></svg><span style="left:45px;letter-spacing:-0.071px;">Nach Kategorie</span></div>
<div id="fbody"></div>
</div>
<div id="grid"><div id="ghead"><div class="gh" style="left:0;width:479px;letter-spacing:0.352px;">Dokumententitel</div><div class="gh gsort" style="left:479px;width:124.5px;letter-spacing:-0.108px;">Erstellt am<svg width="12" height="12" viewBox="0 0 12 12" style="position:absolute;left:76px;top:5.5px"><path d="M6 0.8 L11 10.5 L1 10.5 Z" fill="none" stroke="#f2f5fa" stroke-width="1"/><path d="M6 0.8 L1 10.5" fill="none" stroke="#8f9aaa" stroke-width="1.1"/></svg></div><div class="gh" style="left:603.5px;width:30px;padding-left:5px">Mandant</div></div>
<div class="gr" style="top:27.0px">
<svg class="ic" style="left:25.25px;top:3px" width="15" height="20"><use href="#pdf"/></svg>
<div class="gt" style="letter-spacing:-0.081px;">Schleißheimer Straße 48_Anmeldung_auf_Netzzugang</div><div class="gd" style="letter-spacing:-0.577px;">19.07.2017 12:45</div><div class="gm">Nein</div></div>
<div class="gr" style="top:54.5px">
<svg class="ic" style="left:25.25px;top:3px" width="15" height="20"><use href="#pdf"/></svg>
<div class="gt" style="letter-spacing:-0.288px;">Schleißheimer Straße 48_Planung_Gas</div><div class="gd" style="letter-spacing:-0.577px;">20.07.2017 07:32</div><div class="gm">Nein</div></div>
<div class="gr" style="top:82.0px">
<svg class="ic" style="left:25.25px;top:3px" width="15" height="20"><use href="#pdf"/></svg>
<div class="gt" style="letter-spacing:-0.043px;">Schleißheimer Straße 48 Wiederrufsbelehrung</div><div class="gd" style="letter-spacing:-0.508px;">24.07.2017 11:59</div><div class="gm">Nein</div></div>
<div class="gr gsel" style="top:109.5px">
<svg class="ic" style="left:25.25px;top:3px" width="15" height="20"><use href="#pdf"/></svg>
<div class="gt" style="letter-spacing:-0.251px;">Schleißheimer Straße 48_Netzanschlussvertrag_Gas</div><div class="gd" style="letter-spacing:-0.508px;">24.07.2017 11:59</div><div class="gm">Nein</div></div>
<div class="gr" style="top:137.0px">
<svg class="ic" style="left:24.2px;top:6px" width="16" height="13"><use href="#mail"/></svg>
<div class="gt" style="letter-spacing:-0.297px;">Schleißheimer Straße 48_Rechnung_Gas_anstoßen_BuHa</div><div class="gd" style="letter-spacing:-0.577px;">17.10.2017 10:53</div><div class="gm">Nein</div></div>
<div class="gvl" style="left:478.5px"></div><div class="gvl" style="left:603px"></div>
</div>

</body></html>
